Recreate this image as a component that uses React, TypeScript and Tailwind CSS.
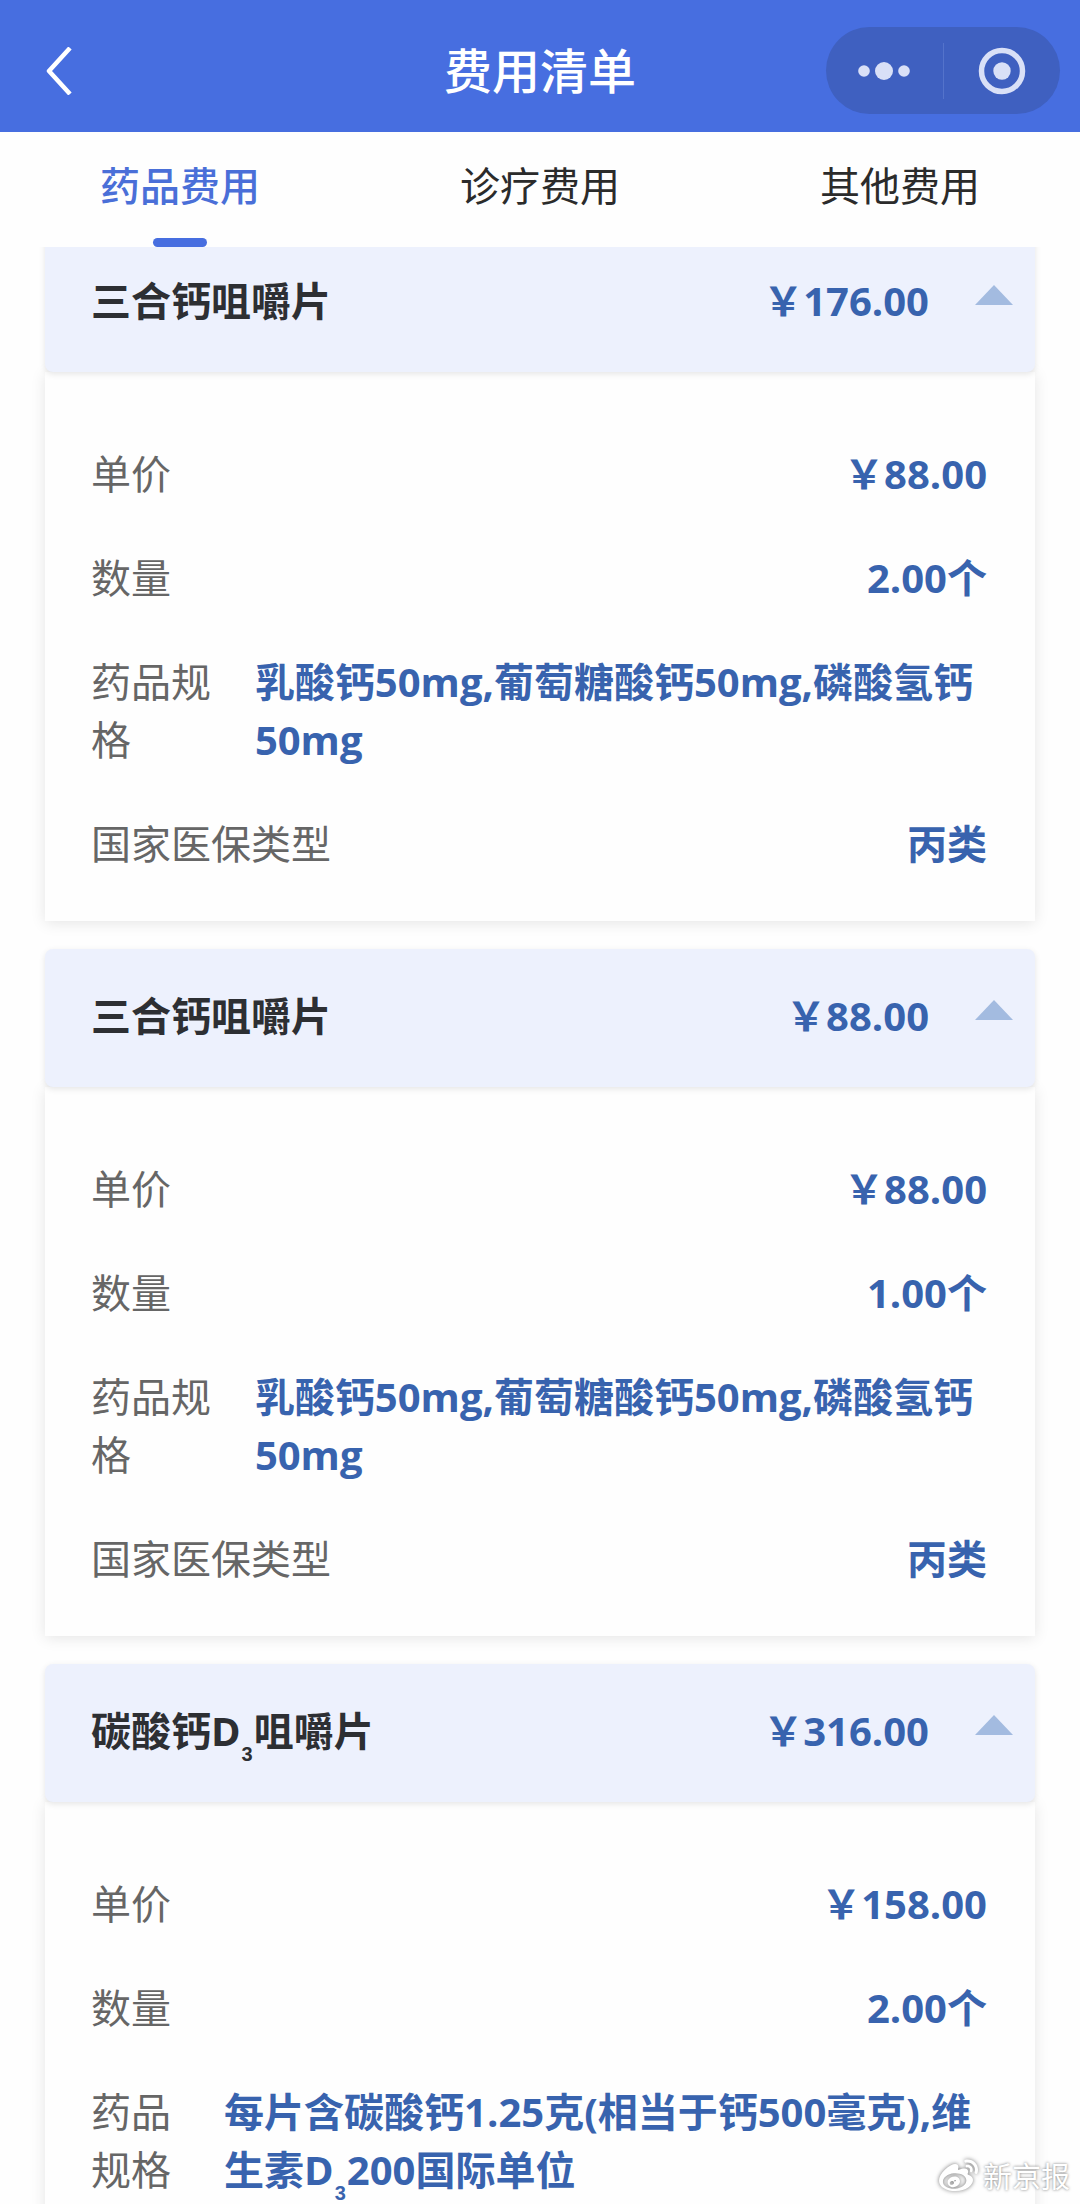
import { useState } from "react";
import type { ReactNode } from "react";
import { FaWeibo } from "react-icons/fa";

interface Fee {
  id: number;
  name: ReactNode;
  total: string;
  rows: { label: string; value: ReactNode }[];
}

const TABS = ["药品费用", "诊疗费用", "其他费用"];

const FEES: Fee[] = [
  {
    id: 1,
    name: "三合钙咀嚼片",
    total: "￥176.00",
    rows: [
      { label: "单价", value: "￥88.00" },
      { label: "数量", value: "2.00个" },
      { label: "药品规格", value: "乳酸钙50mg,葡萄糖酸钙50mg,磷酸氢钙50mg" },
      { label: "国家医保类型", value: "丙类" },
    ],
  },
  {
    id: 2,
    name: "三合钙咀嚼片",
    total: "￥88.00",
    rows: [
      { label: "单价", value: "￥88.00" },
      { label: "数量", value: "1.00个" },
      { label: "药品规格", value: "乳酸钙50mg,葡萄糖酸钙50mg,磷酸氢钙50mg" },
      { label: "国家医保类型", value: "丙类" },
    ],
  },
  {
    id: 3,
    name: (
      <>
        碳酸钙D<Sub>3</Sub>咀嚼片
      </>
    ),
    total: "￥316.00",
    rows: [
      { label: "单价", value: "￥158.00" },
      { label: "数量", value: "2.00个" },
      {
        label: "药品规格",
        value: (
          <>
            每片含碳酸钙1.25克(相当于钙500毫克),维生素D<Sub>3</Sub>200国际单位
          </>
        ),
      },
    ],
  },
];

export default function App() {
  const [tab, setTab] = useState(0);

  return (
    <div className="relative flex h-screen flex-col overflow-hidden bg-[#fefefe] font-['Open_Sans','Noto_Sans_CJK_SC',sans-serif] text-[40px] leading-[58px]">
      <NavBar />

      {/* Tabs */}
      <div role="tablist" className="grid shrink-0 grid-cols-3 bg-[#fefefe]">
        {TABS.map((name, i) => (
          <button
            key={name}
            role="tab"
            aria-selected={i === tab}
            onClick={() => setTab(i)}
            className={
              i === tab
                ? "flex flex-col items-center pt-[25px] font-medium text-[#4a6fd8]"
                : "flex flex-col items-center pt-[25px] text-[#2b2b2b]"
            }
          >
            {name}
            <span
              className={
                i === tab
                  ? "mt-[23px] h-[9px] w-[54px] rounded-full bg-[#476ee0]"
                  : "mt-[23px] h-[9px] w-[54px]"
              }
            />
          </button>
        ))}
      </div>

      {/* The list is scrolled a little way under the tabs */}
      <main className="min-h-0 flex-1 overflow-hidden">
        <div className="-mt-[13px] flex flex-col gap-7 px-[45px]">
          {FEES.map((fee) => (
            <FeeCard key={fee.id} fee={fee} />
          ))}
        </div>
      </main>

      <div className="absolute right-[10px] bottom-[8px] flex items-center gap-[5px] text-[29px] leading-[36px] text-white">
        <FaWeibo size={39} className="drop-shadow-[0_0_2px_rgba(0,0,0,0.55)]" />
        <span className="[text-shadow:0_0_3px_rgba(0,0,0,0.55)]">新京报</span>
      </div>
    </div>
  );
}

function NavBar() {
  return (
    <header className="grid h-[132px] shrink-0 grid-cols-[1fr_auto_1fr] items-center bg-[#476ee0] px-5 pt-[9px] text-white">
      <button aria-label="返回" className="ml-6 justify-self-start">
        <svg width="30" height="48" viewBox="0 0 30 48" fill="none">
          <path d="M26 1 L5 24 L26 47" stroke="currentColor" strokeWidth="4.5" strokeLinejoin="round" />
        </svg>
      </button>
      <h1 className="text-[48px] font-medium">费用清单</h1>
      <div className="flex h-[87px] w-[234px] items-center justify-self-end rounded-full bg-[#3f60c0] text-[#d9e0f7]">
        <button aria-label="更多" className="flex flex-1 justify-center">
          <svg width="52" height="20" viewBox="0 0 52 20" fill="currentColor">
            <circle cx="6" cy="10" r="5.8" />
            <circle cx="26" cy="10" r="9" />
            <circle cx="46" cy="10" r="5.8" />
          </svg>
        </button>
        <span className="h-14 w-px bg-[#5473cb]" />
        <button aria-label="关闭" className="flex flex-1 justify-center">
          <svg width="48" height="48" viewBox="0 0 48 48">
            <circle cx="24" cy="24" r="20.5" fill="none" stroke="currentColor" strokeWidth="5.5" />
            <circle cx="24" cy="24" r="8.7" fill="currentColor" />
          </svg>
        </button>
      </div>
    </header>
  );
}

function FeeCard({ fee }: { fee: Fee }) {
  const [open, setOpen] = useState(true);

  return (
    <section>
      <button
        aria-expanded={open}
        onClick={() => setOpen(!open)}
        className="relative flex w-full items-center rounded-lg bg-[#edf1fd] pt-[38px] pr-[22px] pb-[42px] pl-[46px] text-left shadow-[0_2px_6px_rgba(0,0,0,0.1)]"
      >
        <span className="flex-1 font-bold text-[#2d2f33]">{fee.name}</span>
        <span className="font-bold text-[#3863ae]">{fee.total}</span>
        <svg
          width="38"
          height="32"
          viewBox="0 0 38 32"
          className={open ? "ml-[46px] text-[#a3bbe0]" : "ml-[46px] rotate-180 text-[#a3bbe0]"}
        >
          <path d="M19 0 L38 20 H0 Z" fill="currentColor" />
        </svg>
      </button>

      {open && (
        <dl className="flex flex-col gap-[46px] bg-[#fefefe] pt-[73px] pr-12 pb-12 pl-[46px] shadow-[0_2px_14px_rgba(0,0,0,0.1)]">
          {fee.rows.map((row) => (
            <div key={row.label} className="flex justify-between gap-[22px]">
              <dt className="text-[#666]">{row.label}</dt>
              <dd className="font-bold text-[#3863ae]">{row.value}</dd>
            </div>
          ))}
        </dl>
      )}
    </section>
  );
}

function Sub({ children }: { children: ReactNode }) {
  return (
    <sub className="bottom-0 px-px align-[-15px] font-['Liberation_Sans',sans-serif] text-[20px] font-bold">
      {children}
    </sub>
  );
}
